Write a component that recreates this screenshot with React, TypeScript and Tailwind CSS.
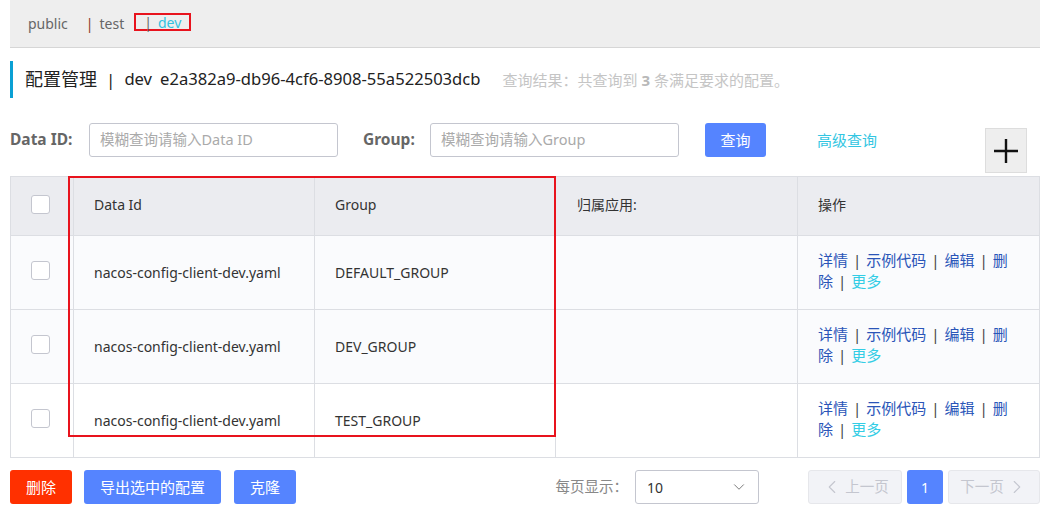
import { ChevronDown, ChevronLeft, ChevronRight } from "lucide-react";

const rows = [
  { dataId: "nacos-config-client-dev.yaml", group: "DEFAULT_GROUP", bg: "bg-[#fafbfd]" },
  { dataId: "nacos-config-client-dev.yaml", group: "DEV_GROUP", bg: "bg-[#fafbfd]" },
  { dataId: "nacos-config-client-dev.yaml", group: "TEST_GROUP", bg: "bg-white" },
];

const Checkbox = () => (
  <span className="block w-[19px] h-[19px] rounded-[3px] border border-[#c4c6cf] bg-white" />
);

const Sep = () => <span className="mx-[5px] text-[#444]">|</span>;

const Ops = () => (
  <div className="text-[15px] leading-[21px] text-[#2a55b8]">
    <div>
      <span>详情</span>
      <Sep />
      <span>示例代码</span>
      <Sep />
      <span>编辑</span>
      <Sep />
      <span>删</span>
    </div>
    <div>
      <span>除</span>
      <Sep />
      <span className="text-[#33cde5]">更多</span>
    </div>
  </div>
);

const App = () => {
  return (
    <div className="w-[1046px] h-[515px] bg-white pl-[10px] pr-[6px] text-[#333] font-['Noto_Sans','Noto_Sans_CJK_SC',sans-serif] overflow-hidden">
      {/* namespace bar */}
      <div className="h-[48px] bg-[#eeeeee] border-b border-[#d6d6d6] flex items-center pl-[18px] text-[14px] text-[#666]">
        <span>public</span>
        <span className="ml-[18px]">
          <span className="text-[#8a3a22]">|</span>
          <span className="ml-[6px]">test</span>
        </span>
        <span className="ml-[10px] mt-[-3px] w-[57px] h-[18px] border-2 border-[#e8131d] flex items-center pl-[8px]">
          <span className="text-[#666]">|</span>
          <span className="ml-[6px] text-[#33c1e0]">dev</span>
        </span>
      </div>

      {/* title */}
      <div className="mt-[13px] h-[37px] border-l-[3px] border-[#0aa0d4] pl-[12px] flex items-center">
        <span className="text-[18px] text-[#222]">配置管理</span>
        <span className="mx-[9px] text-[17px] text-[#222]">|</span>
        <span className="text-[16.6px] text-[#222]">dev</span>
        <span className="ml-[8px] text-[16.6px] text-[#222]">e2a382a9-db96-4cf6-8908-55a522503dcb</span>
        <span className="ml-[22px] mt-[2px] text-[15px] text-[#c5c5c5]">
          查询结果：共查询到 <b className="font-bold text-[#b8b8b8]">3</b> 条满足要求的配置。
        </span>
      </div>

      {/* search row */}
      <div className="mt-[25px] flex items-start">
        <div className="h-[34px] flex items-center w-[79px] text-[15.5px] font-bold text-[#666]">Data ID:</div>
        <div className="w-[249px] h-[34px] border border-[#c4c6cf] rounded-[3px] flex items-center pl-[10px] text-[14.5px] text-[#aaa]">
          模糊查询请输入Data ID
        </div>
        <div className="ml-[25px] h-[34px] flex items-center w-[67px] text-[15.5px] font-bold text-[#666]">Group:</div>
        <div className="w-[249px] h-[34px] border border-[#c4c6cf] rounded-[3px] flex items-center pl-[10px] text-[14.5px] text-[#aaa]">
          模糊查询请输入Group
        </div>
        <button className="ml-[26px] w-[61px] h-[34px] rounded-[3px] bg-[#5584ff] text-white text-[15px]">查询</button>
        <div className="ml-[51px] h-[34px] flex items-center text-[15px] text-[#33c6e2]">高级查询</div>
        <button className="ml-auto mr-[13px] mt-[5px] w-[42px] h-[45px] bg-[#eeeeee] border border-[#dddddd] flex items-center justify-center">
          <svg width="26" height="26" viewBox="0 0 26 26">
            <path d="M13 1v24M1 13h24" stroke="#111" strokeWidth="2.4" />
          </svg>
        </button>
      </div>

      {/* table */}
      <div className="relative mt-[3px] border border-[#dcdee3] text-[14px]">
        <div className="flex h-[58px] bg-[#ebecf0]">
          <div className="w-[62px] flex items-center pl-[20px] pb-[4px]">
            <Checkbox />
          </div>
          <div className="w-[241px] border-l border-[#dcdee3] flex items-center pl-[20px] pb-[3px]">Data Id</div>
          <div className="w-[241px] border-l border-[#dcdee3] flex items-center pl-[20px] pb-[3px]">Group</div>
          <div className="w-[242px] border-l border-[#dcdee3] flex items-center pl-[21px] pb-[3px]">归属应用:</div>
          <div className="flex-1 border-l border-[#dcdee3] flex items-center pl-[20px] pb-[3px]">操作</div>
        </div>
        {rows.map((r, i) => (
          <div key={i} className={`flex h-[74px] border-t border-[#dcdee3] ${r.bg}`}>
            <div className="w-[62px] flex items-center pl-[20px] pb-[4px]">
              <Checkbox />
            </div>
            <div className="w-[241px] border-l border-[#dcdee3] flex items-center pl-[20px] pb-[1px]">{r.dataId}</div>
            <div className="w-[241px] border-l border-[#dcdee3] flex items-center pl-[20px] pb-[1px]">{r.group}</div>
            <div className="w-[242px] border-l border-[#dcdee3]" />
            <div className="flex-1 border-l border-[#dcdee3] flex items-center pl-[20px] pb-[3px]">
              <Ops />
            </div>
          </div>
        ))}
        <div className="absolute left-[57px] top-[-1px] w-[488px] h-[261px] border-2 border-[#e8131d]" />
      </div>

      {/* footer */}
      <div className="mt-[12px] flex items-center">
        <button className="w-[62px] h-[34px] rounded-[3px] bg-[#ff3000] text-white text-[15px]">删除</button>
        <button className="ml-[12px] w-[137px] h-[34px] rounded-[3px] bg-[#5584ff] text-white text-[15px]">导出选中的配置</button>
        <button className="ml-[13px] w-[62px] h-[34px] rounded-[3px] bg-[#5584ff] text-white text-[15px]">克隆</button>

        <div className="ml-auto flex items-center">
          <span className="text-[14.5px] text-[#888]">每页显示：</span>
          <div className="ml-[7px] w-[124px] h-[34px] border border-[#c4c6cf] rounded-[3px] flex items-center pl-[11px] pr-[10px] text-[14px] text-[#333]">
            <span>10</span>
            <ChevronDown className="ml-auto text-[#777]" size={18} strokeWidth={1.3} />
          </div>
          <div className="ml-[49px] w-[94px] h-[34px] rounded-[3px] border border-[#e6e7eb] bg-[#f2f3f7] flex items-center justify-center text-[14.5px] text-[#c4c6cf]">
            <ChevronLeft size={22} strokeWidth={1.2} className="mr-[2px]" />
            上一页
          </div>
          <div className="ml-[5px] w-[36px] h-[34px] rounded-[3px] bg-[#5584ff] text-white flex items-center justify-center text-[14px]">1</div>
          <div className="ml-[5px] w-[92px] h-[34px] rounded-[3px] border border-[#e6e7eb] bg-[#f2f3f7] flex items-center justify-center text-[14.5px] text-[#c4c6cf]">
            下一页
            <ChevronRight size={22} strokeWidth={1.2} className="ml-[2px]" />
          </div>
        </div>
      </div>
    </div>
  );
};

export default App;
